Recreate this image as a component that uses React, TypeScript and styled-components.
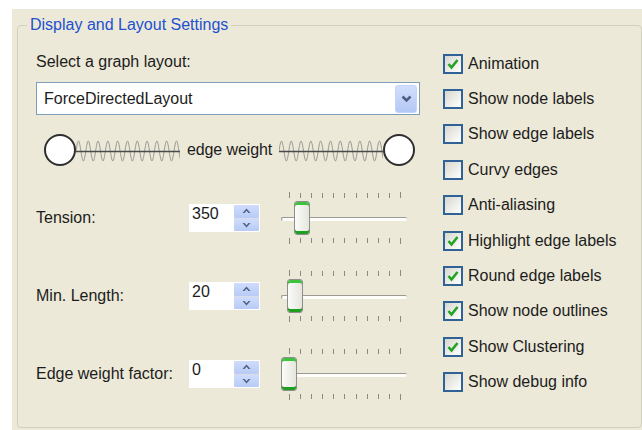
import React from "react";
import styled, { createGlobalStyle } from "styled-components";

const GlobalStyle = createGlobalStyle`
  html, body { margin: 0; padding: 0; background: #fff; }
  body {
    font-family: "Liberation Sans", Arial, sans-serif;
    font-size: 16px;
    color: #1c1c1c;
  }
  * { box-sizing: border-box; }
`;

const Page = styled.div`
  width: 642px;
  height: 430px;
  padding: 9px 0 0 12px;
  background: #fff;
  overflow: hidden;
`;

const Panel = styled.div`
  height: 421px;
  background: #ece9d8;
  padding: 7px 0 0 5px;
`;

const Group = styled.fieldset`
  margin: 0;
  padding: 0;
  min-width: 0;
  width: 625px;
  height: 412px;
  border: 1px solid #d0d0bf;
  border-radius: 4px;
`;

const Legend = styled.legend`
  margin-left: 9px;
  padding: 0 3px;
  font-size: 16px;
  line-height: 18px;
  color: #2350d0;
`;

const Body = styled.div`
  display: flex;
  gap: 23px;
  padding: 11px 0 0 18px;
`;

const LeftColumn = styled.div`
  width: 384px;
  display: flex;
  flex-direction: column;
  padding-top: 8px;
`;

const Caption = styled.div`
  line-height: 18px;
`;

const Select = styled.div`
  margin-top: 11px;
  height: 33px;
  border: 1px solid #7f9db9;
  background: #fff;
  display: flex;
  align-items: center;
  padding: 0 2px 0 7px;
`;

const SelectText = styled.span`
  flex: 1;
  line-height: 18px;
`;

const DropButton = styled.span`
  width: 22px;
  height: 28px;
  border-radius: 3px;
  border: 1px solid #c4d3f7;
  background: linear-gradient(#d2defc, #b4c8f5);
  display: flex;
  align-items: center;
  justify-content: center;
`;

const SpringRow = styled.div`
  margin: 18px 5px 0 8px;
  height: 34px;
  display: flex;
  align-items: center;
`;

const Node = styled.span`
  flex-shrink: 0;
  width: 32px;
  height: 32px;
  border-radius: 50%;
  border: 2px solid #2e2e2e;
  background: #fff;
`;

const SpringSvg = styled.svg`
  flex: 1;
  height: 34px;
  display: block;
`;

const SpringLabel = styled.span`
  margin: 0 7px;
  line-height: 18px;
  letter-spacing: -0.1px;
`;

const SettingRow = styled.div<{ $first?: boolean }>`
  margin-top: ${(p) => (p.$first ? "25px" : "26px")};
  height: 52px;
  display: flex;
  align-items: center;
`;

const SettingLabel = styled.span`
  width: 153px;
  line-height: 18px;
`;

const Spin = styled.div`
  width: 71px;
  height: 28px;
  background: #fff;
  display: flex;
  padding: 1px 1px 1px 3px;
`;

const SpinValue = styled.span`
  flex: 1;
  line-height: 18px;
`;

const SpinButtons = styled.span`
  width: 25px;
  display: flex;
  flex-direction: column;
  gap: 1px;
  background: #d9dde6;
`;

const SpinButton = styled.span`
  flex: 1;
  border-radius: 2px;
  background: linear-gradient(#cfdcfc, #b7cbf6);
  display: flex;
  align-items: center;
  justify-content: center;
`;

const Slider = styled.div`
  margin-left: 21px;
  width: 126px;
  height: 52px;
  display: flex;
  flex-direction: column;
`;

const Ticks = styled.div<{ $below?: boolean }>`
  height: 6px;
  display: flex;
  justify-content: space-between;
  align-items: ${(p) => (p.$below ? "flex-start" : "flex-end")};
  padding: 0 6px 0 8px;
`;

const Tick = styled.span<{ $end?: boolean }>`
  width: 1px;
  height: ${(p) => (p.$end ? "6px" : "5px")};
  background: #8a8a84;
`;

const TrackArea = styled.div`
  position: relative;
  flex: 1;
  display: flex;
  align-items: center;
`;

const Track = styled.div`
  width: 100%;
  height: 4px;
  margin-top: 2px;
  border-radius: 2px;
  border-top: 1px solid #9a9a92;
  border-left: 1px solid #9a9a92;
  background: #fdfdfb;
`;

const Thumb = styled.span`
  position: absolute;
  top: 3px;
  width: 16px;
  height: 34px;
  border: 1px solid #8e8f8c;
  border-radius: 3px;
  background: linear-gradient(90deg, #fbfbf9, #e6e6de);
  box-shadow: inset 0 3px 0 #3fc23f, inset 0 -3px 0 #1f9f1f;
`;

const Checks = styled.div`
  display: flex;
  flex-direction: column;
  padding-top: 1px;
`;

const CheckRow = styled.label`
  height: 35.4px;
  display: flex;
  align-items: center;
  gap: 5px;
  line-height: 18px;
`;

const Box = styled.span`
  width: 20px;
  height: 20px;
  border: 2px solid #2f6396;
  background: linear-gradient(135deg, #d8d7ce, #ffffff);
  display: flex;
  align-items: center;
  justify-content: center;
`;

const Chevron = () => (
  <svg width="11" height="8" viewBox="0 0 11 8">
    <polyline points="1.5,1.5 5.5,5.5 9.5,1.5" fill="none" stroke="#4d6185" strokeWidth="2.6" />
  </svg>
);

const SpinArrow = ({ up }: { up?: boolean }) => (
  <svg width="9" height="6" viewBox="0 0 9 6">
    <polygon
      points={up ? "4.5,0.5 8.5,5 6.5,5 4.5,2.8 2.5,5 0.5,5" : "4.5,5.5 8.5,1 6.5,1 4.5,3.2 2.5,1 0.5,1"}
      fill="#4d6185"
    />
  </svg>
);

const Check = () => (
  <svg width="14" height="14" viewBox="0 0 14 14">
    <polyline points="2.5,7 5.5,10.5 11.5,3" fill="none" stroke="#22a322" strokeWidth="2.6" />
  </svg>
);

// one spring segment: a straight rod with a sine coil wound around it
const wave = (() => {
  const pts: string[] = [];
  for (let x = 0; x <= 130; x += 0.5) {
    const y = 18 - 10 * Math.sin((2 * Math.PI * x) / 9.8);
    pts.push(`${x.toFixed(1)},${y.toFixed(2)}`);
  }
  return pts.join(" ");
})();

const Spring = () => (
  <SpringSvg>
    <polyline points={wave} fill="none" stroke="#9a9a94" strokeWidth="1" />
    <line x1="0" y1="18.5" x2="140" y2="18.5" stroke="#4a4a4a" strokeWidth="1.3" />
  </SpringSvg>
);

const TICKS = Array.from({ length: 11 }, (_, i) => i);

const RangeSlider = ({ offset }: { offset: number }) => (
  <Slider>
    <Ticks>
      {TICKS.map((i) => (
        <Tick key={i} $end={i === 0 || i === 10} />
      ))}
    </Ticks>
    <TrackArea>
      <Track />
      <Thumb style={{ left: offset }} />
    </TrackArea>
    <Ticks $below>
      {TICKS.map((i) => (
        <Tick key={i} $end={i === 0 || i === 10} />
      ))}
    </Ticks>
  </Slider>
);

const settings = [
  { label: "Tension:", value: "350", offset: 13 },
  { label: "Min. Length:", value: "20", offset: 6 },
  { label: "Edge weight factor:", value: "0", offset: 0 },
];

const options: [string, boolean][] = [
  ["Animation", true],
  ["Show node labels", false],
  ["Show edge labels", false],
  ["Curvy edges", false],
  ["Anti-aliasing", false],
  ["Highlight edge labels", true],
  ["Round edge labels", true],
  ["Show node outlines", true],
  ["Show Clustering", true],
  ["Show debug info", false],
];

export default function App() {
  return (
    <>
      <GlobalStyle />
      <Page>
        <Panel>
          <Group>
            <Legend>Display and Layout Settings</Legend>
            <Body>
              <LeftColumn>
                <Caption>Select a graph layout:</Caption>
                <Select>
                  <SelectText>ForceDirectedLayout</SelectText>
                  <DropButton>
                    <Chevron />
                  </DropButton>
                </Select>
                <SpringRow>
                  <Node />
                  <Spring />
                  <SpringLabel>edge weight</SpringLabel>
                  <Spring />
                  <Node />
                </SpringRow>
                {settings.map((s, i) => (
                  <SettingRow key={s.label} $first={i === 0}>
                    <SettingLabel>{s.label}</SettingLabel>
                    <Spin>
                      <SpinValue>{s.value}</SpinValue>
                      <SpinButtons>
                        <SpinButton>
                          <SpinArrow up />
                        </SpinButton>
                        <SpinButton>
                          <SpinArrow />
                        </SpinButton>
                      </SpinButtons>
                    </Spin>
                    <RangeSlider offset={s.offset} />
                  </SettingRow>
                ))}
              </LeftColumn>
              <Checks>
                {options.map(([name, on]) => (
                  <CheckRow key={name}>
                    <Box>{on && <Check />}</Box>
                    {name}
                  </CheckRow>
                ))}
              </Checks>
            </Body>
          </Group>
        </Panel>
      </Page>
    </>
  );
}
